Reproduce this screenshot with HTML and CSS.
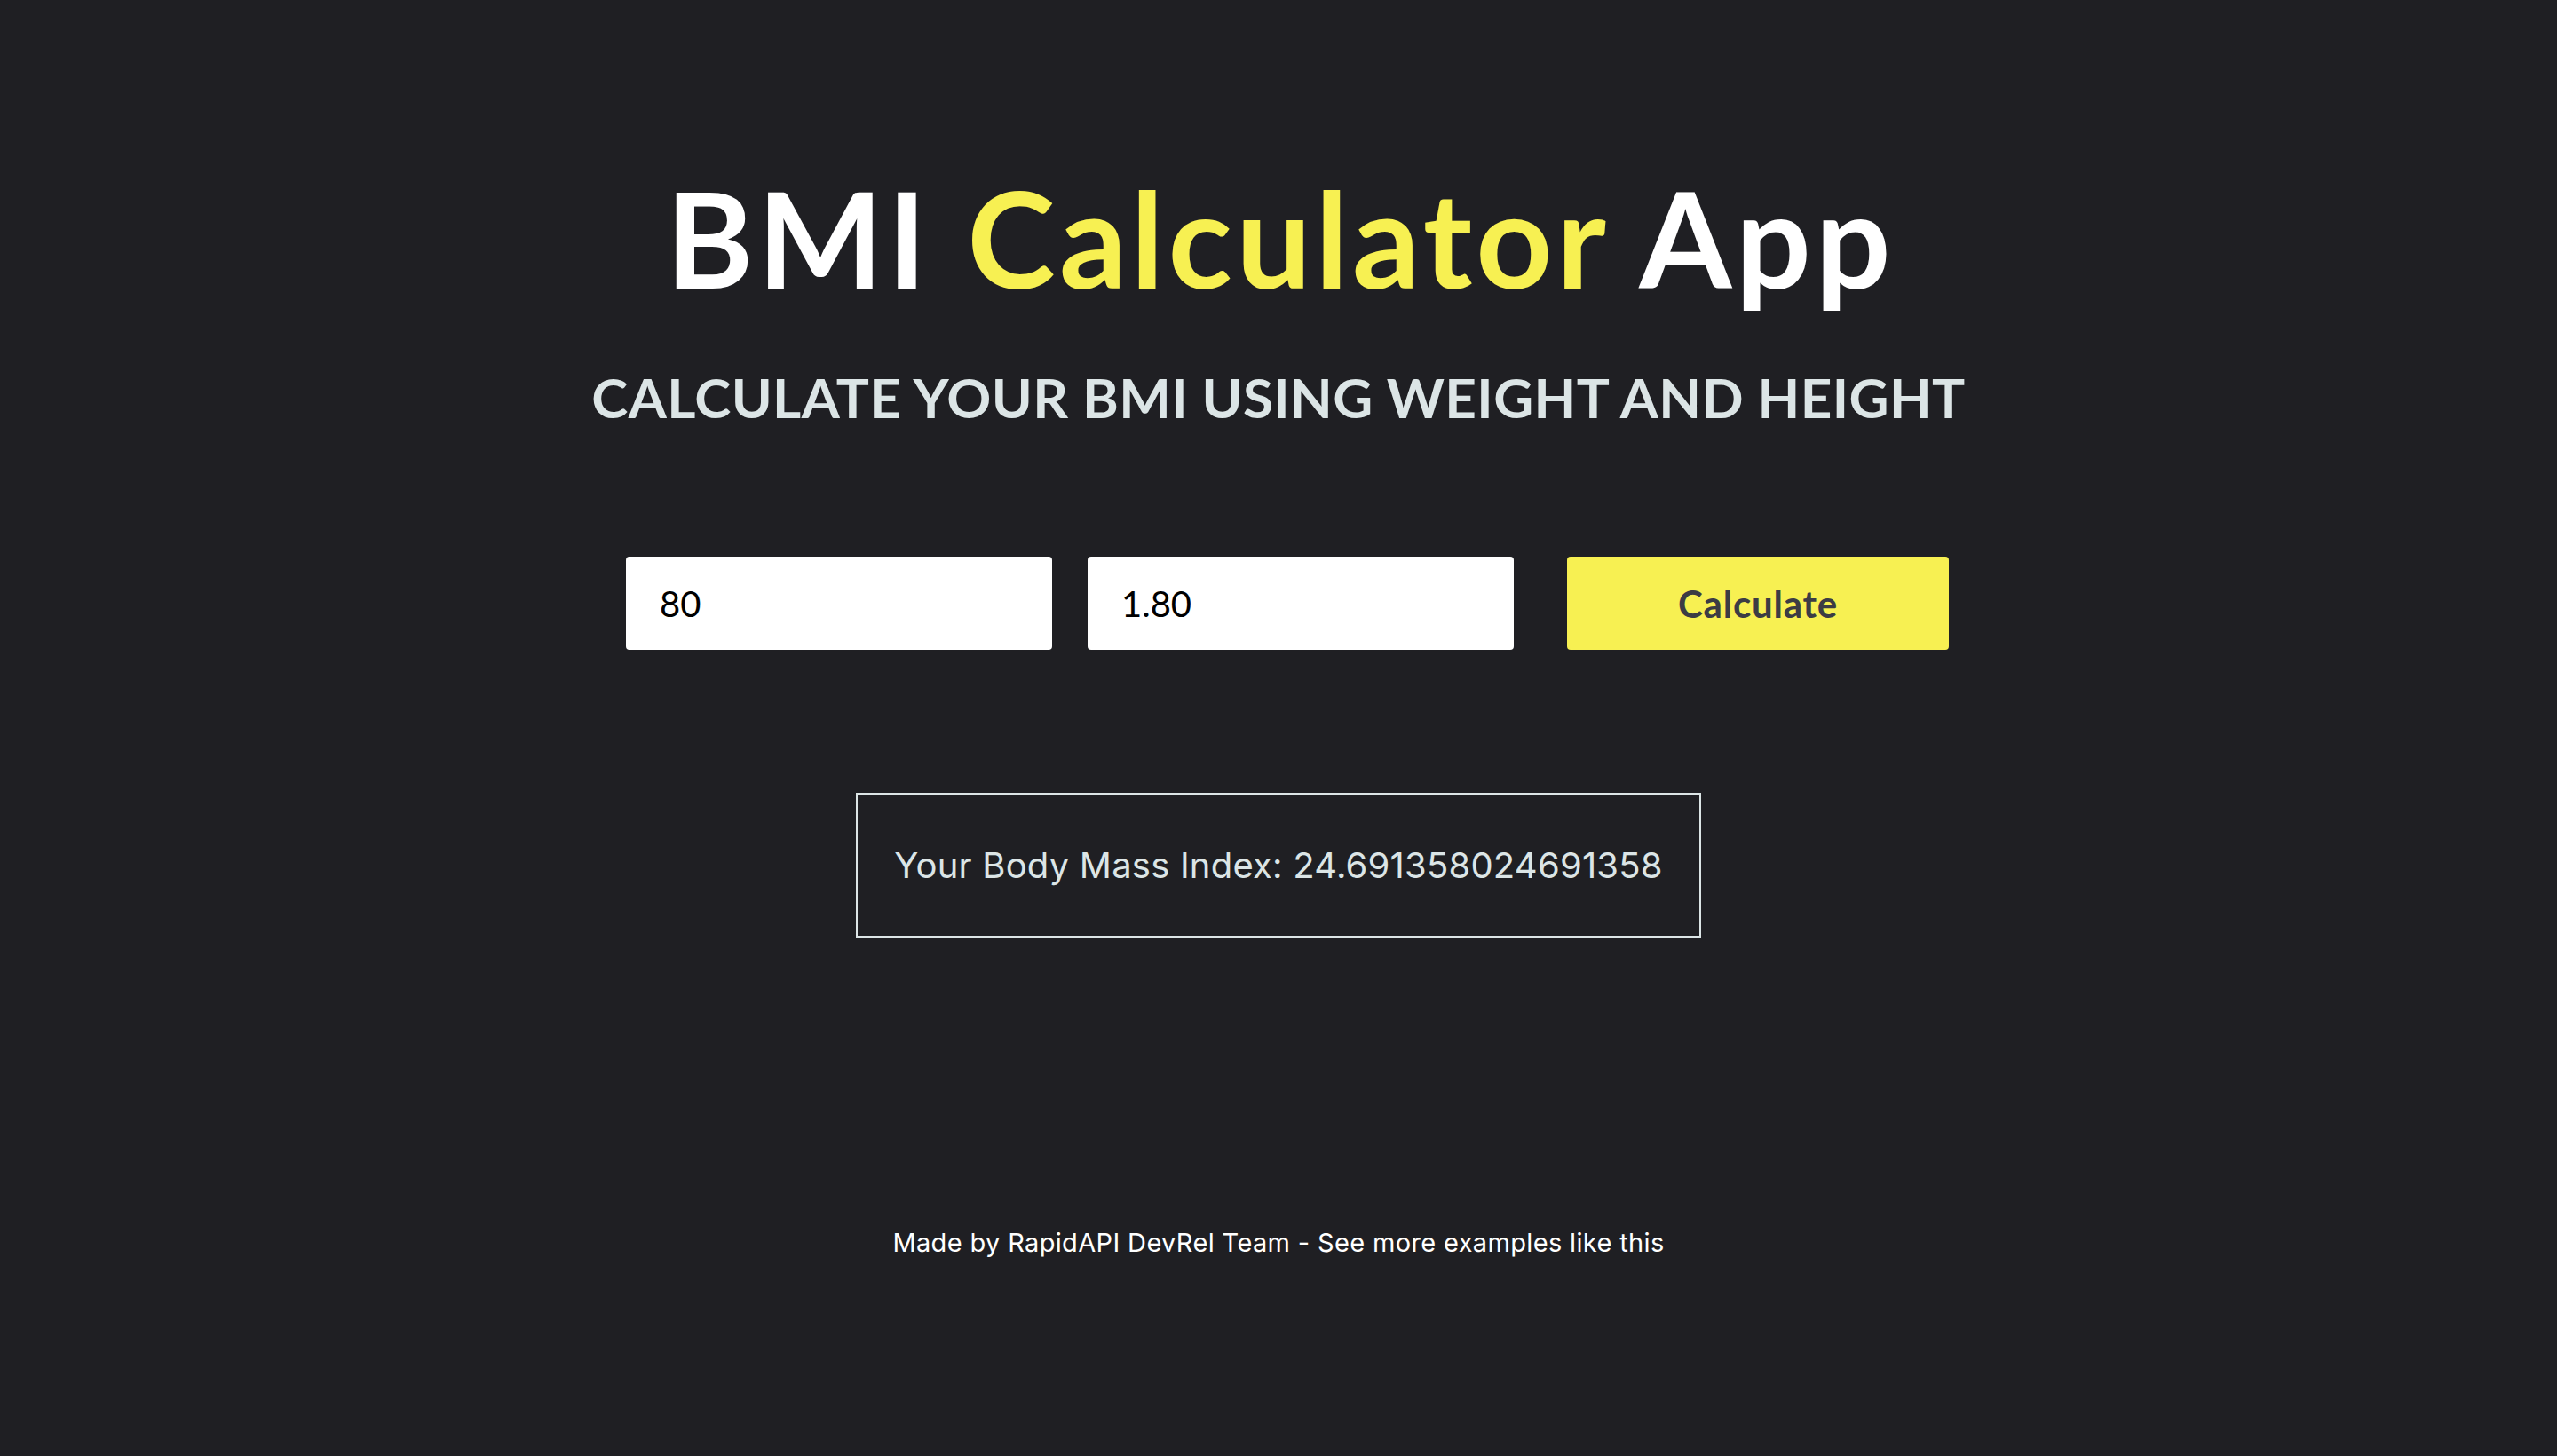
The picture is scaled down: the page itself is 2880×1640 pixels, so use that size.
FILE: index.html
```html
<!DOCTYPE html>
<html lang="en">
<head>
<meta charset="utf-8">
<title>BMI Calculator App</title>
<link rel="stylesheet" href="styles.css">
</head>
<body>
<main class="page">
  <h1 class="title">BMI <span class="accent">Calculator</span> App</h1>
  <h2 class="subtitle">CALCULATE YOUR BMI USING WEIGHT AND HEIGHT</h2>
  <form class="form-row">
    <input class="field" type="text" value="80">
    <input class="field" type="text" value="1.80">
    <button class="calc-btn" type="button">Calculate</button>
  </form>
  <div class="result">Your Body Mass Index: 24.691358024691358</div>
  <footer class="footer">Made by RapidAPI DevRel Team - See more examples like this</footer>
</main>
</body>
</html>
```
FILE: styles.css
```css
html, body {
  margin: 0;
  padding: 0;
  background: #1f1f23;
}
.page {
  display: flex;
  flex-direction: column;
  align-items: center;
  min-height: 1640px;
  font-family: Lato, "Open Sans", sans-serif;
}
.title {
  margin: 192px 0 0;
  padding-left: 4px;
  font-size: 150px;
  line-height: 150px;
  font-weight: 700;
  color: #ffffff;
  letter-spacing: 4.5px;
}
.accent {
  color: #f7f052;
}
.subtitle {
  margin: 65px 0 0;
  font-size: 62px;
  line-height: 80px;
  font-weight: 700;
  color: #dce5e6;
  letter-spacing: 0.4px;
}
.form-row {
  display: flex;
  gap: 40px;
  margin: 140px 0 0;
  padding-left: 20px;
}
.field {
  width: 480px;
  height: 105px;
  box-sizing: border-box;
  border: none;
  border-radius: 4px;
  padding: 0 38px;
  font-family: Lato, sans-serif;
  font-size: 40px;
  color: #000;
  background: #fff;
  outline: none;
}
.calc-btn {
  width: 430px;
  height: 105px;
  margin-left: 20px;
  border: none;
  border-radius: 4px;
  background: #f7f052;
  color: #3c3c44;
  font-family: Lato, sans-serif;
  font-weight: 700;
  font-size: 42px;
  letter-spacing: 0.8px;
}
.result {
  margin-top: 161px;
  width: 952px;
  height: 163px;
  box-sizing: border-box;
  border: 2px solid #dce5e6;
  display: flex;
  align-items: center;
  justify-content: center;
  font-family: Inter, "Liberation Sans", sans-serif;
  font-size: 40px;
  letter-spacing: 0.2px;
  color: #dce5e6;
}
.footer {
  margin-top: 326px;
  font-family: Inter, "Liberation Sans", sans-serif;
  font-size: 29px;
  letter-spacing: 0.35px;
  color: #ffffff;
}
```
